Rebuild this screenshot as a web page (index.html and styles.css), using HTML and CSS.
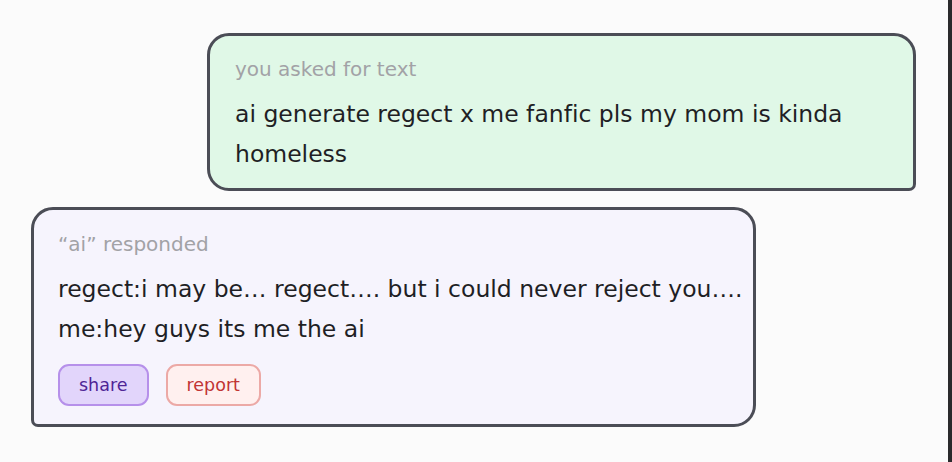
FILE: index.html
```html
<!DOCTYPE html>
<html>
<head>
<meta charset="utf-8">
<link rel="stylesheet" href="styles.css">
</head>
<body>
<div class="page">
  <div class="thread">
    <div class="card card-user">
      <div class="label">you asked for text</div>
      <div class="body">ai generate regect x me fanfic pls my mom is kinda homeless</div>
    </div>
    <div class="card card-ai">
      <div class="label">“ai” responded</div>
      <div class="body body-ai">regect:i may be… regect…. but i could never reject you….<br>me:hey guys its me the ai</div>
      <div class="actions">
        <button class="btn btn-share">share</button>
        <button class="btn btn-report">report</button>
      </div>
    </div>
  </div>
</div>
</body>
</html>
```
FILE: styles.css
```css
html, body {
  margin: 0;
  padding: 0;
  height: 100%;
}
body {
  background: #fbfbfb;
  font-family: "DejaVu Sans", "Liberation Sans", sans-serif;
  color: #1f1f25;
}
.page {
  box-sizing: border-box;
  height: 100%;
  border-right: 4px solid #2a2a2c;
  padding: 33px 32px 0 31px;
}
.thread {
  display: flex;
  flex-direction: column;
  gap: 16px;
}
.card {
  box-sizing: border-box;
  border: 3px solid #4b4d56;
  border-radius: 22px;
}
.card-user {
  align-self: flex-end;
  width: 709px;
  background: #e0f8e7;
  border-bottom-right-radius: 7px;
  padding: 21px 24px 14px 25px;
}
.card-ai {
  align-self: flex-start;
  width: 725px;
  background: #f6f4fd;
  border-bottom-left-radius: 7px;
  padding: 22px 14px 18px 24px;
}
.label {
  font-size: 20px;
  line-height: 24px;
  color: #a2a2a6;
}
.body {
  font-size: 23.5px;
  line-height: 39.5px;
  margin-top: 14px;
  font-variant-ligatures: none;
}
.body-ai {
  white-space: nowrap;
}
.actions {
  display: flex;
  gap: 17px;
  margin-top: 15px;
}
.btn {
  font-family: inherit;
  font-size: 17.5px;
  height: 42px;
  padding: 0 19px;
  border-radius: 11px;
  border: 2px solid;
}
.btn-share {
  background: #e2d5fb;
  border-color: #b690ea;
  color: #4f2596;
}
.btn-report {
  background: #fff0ef;
  border-color: #eca9a6;
  color: #c13434;
}
```
